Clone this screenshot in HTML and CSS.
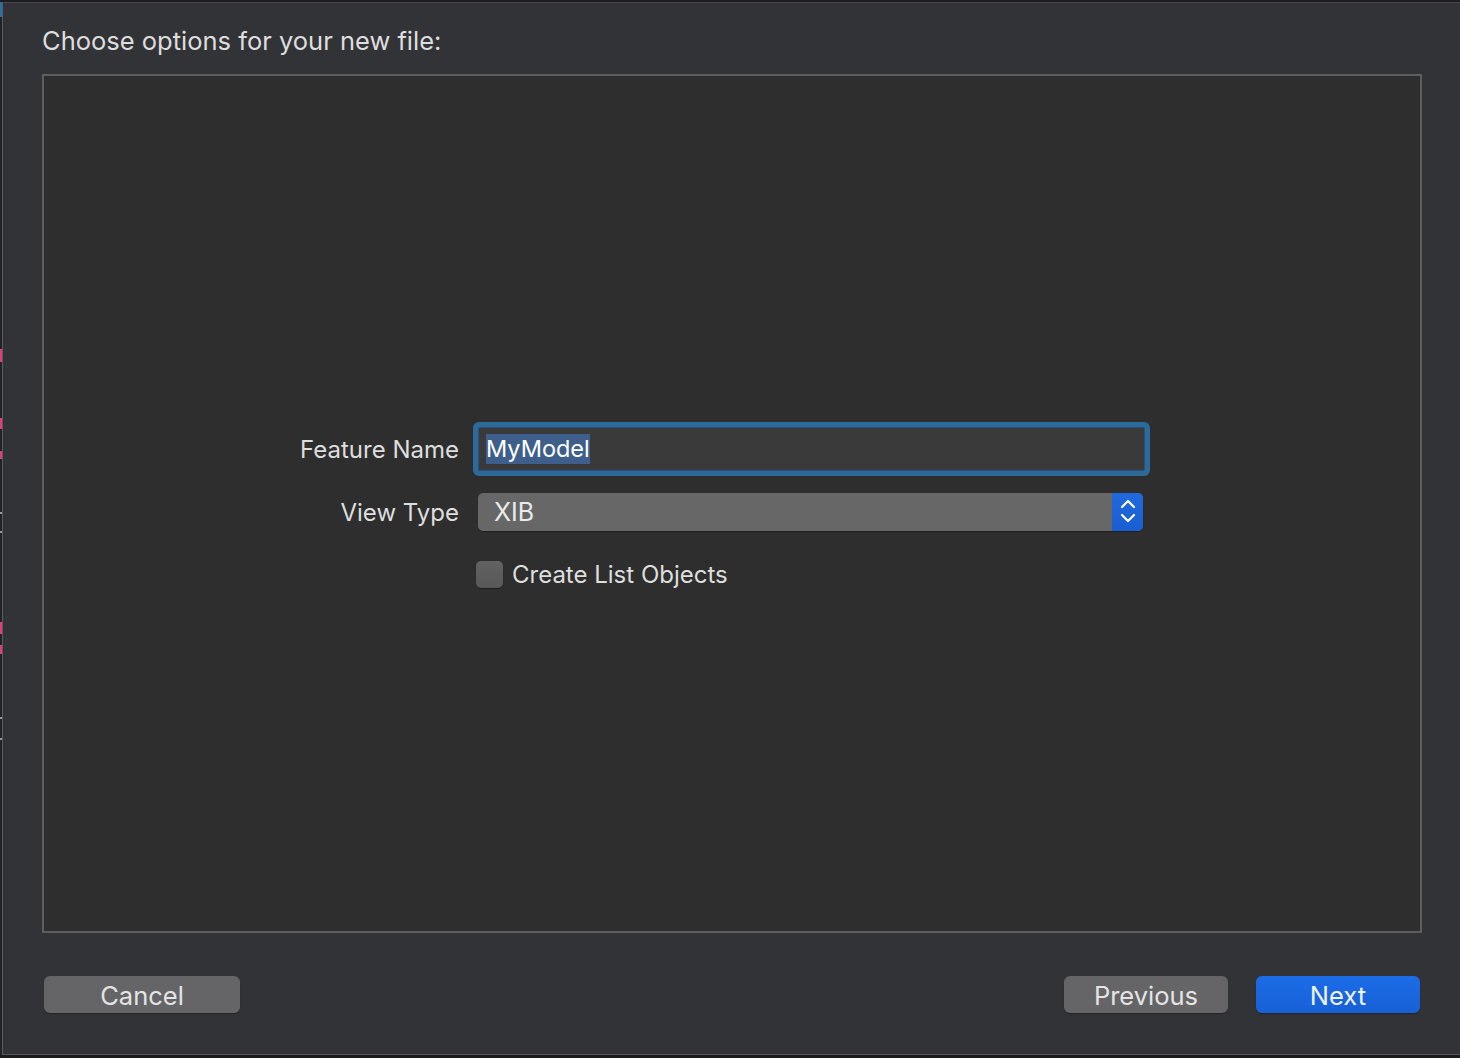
FILE: index.html
```html
<!DOCTYPE html>
<html lang="en">
<head>
<meta charset="UTF-8">
<meta name="viewport" content="width=device-width, initial-scale=1.0">
<title>Choose options for your new file</title>
<link rel="stylesheet" href="styles.css">
</head>
<body>
<div class="window">
    <div class="edge"></div>
    <div class="sheet">
        <h1 class="title">Choose options for your new file:</h1>
        <div class="panel">
            <div class="options">
                <div class="opt-label">Feature Name</div>
                <div class="field"><span class="selected">MyModel</span></div>

                <div class="opt-label">View Type</div>
                <div class="popup">
                    <div class="popup-value">XIB</div>
                    <div class="stepper">
                        <svg width="16" height="26" viewBox="0 0 16 26">
                            <path d="M2 8 L8 2 L14 8" fill="none" stroke="#fff" stroke-width="2.2" stroke-linecap="round" stroke-linejoin="round"/>
                            <path d="M2 16 L8 22 L14 16" fill="none" stroke="#fff" stroke-width="2.2" stroke-linecap="round" stroke-linejoin="round"/>
                        </svg>
                    </div>
                </div>

                <div></div>
                <div class="check-row">
                    <div class="checkbox"></div>
                    <div class="check-label">Create List Objects</div>
                </div>
            </div>
        </div>
        <div class="footer">
            <button class="btn btn-cancel">Cancel</button>
            <div class="spacer"></div>
            <button class="btn btn-prev">Previous</button>
            <button class="btn btn-next">Next</button>
        </div>
    </div>
</div>
</body>
</html>
```

FILE: styles.css
```css
body {
    margin: 0;
    background-color: #1c1c1e;
    font-family: Inter, "Liberation Sans", Arial, sans-serif;
    color: #dedede;
}

.window {
    display: flex;
    height: 1058px;
    box-sizing: border-box;
    border-top: 2px solid #1c1c1e;
    border-bottom: 3px solid #1c1c1e;
}

.edge {
    width: 2px;
    background: linear-gradient(to bottom,
        #2a6fa8 0, #2a6fa8 15px, #222326 15px, #222326 347px,
        #e0407a 347px, #e0407a 360px, #222326 360px, #222326 416px,
        #e0407a 416px, #e0407a 427px, #222326 427px, #222326 449px,
        #e0407a 449px, #e0407a 457px, #222326 457px, #222326 510px,
        #9a9a9a 510px, #9a9a9a 512px, #222326 512px, #222326 529px,
        #9a9a9a 529px, #9a9a9a 531px, #222326 531px, #222326 620px,
        #e0407a 620px, #e0407a 632px, #222326 632px, #222326 643px,
        #e0407a 643px, #e0407a 652px, #222326 652px, #222326 715px,
        #9a9a9a 715px, #9a9a9a 717px, #222326 717px, #222326 736px,
        #9a9a9a 736px, #9a9a9a 738px, #222326 738px);
}

.sheet {
    flex: 1;
    display: flex;
    flex-direction: column;
    background-color: #323337;
    border-left: 1px solid #5a5a5e;
    border-top: 1px solid #48484c;
    border-bottom: 1px solid #58585c;
    padding: 23px 38px 0 39px;
}

.title {
    margin: 0 0 18px 0;
    font-size: 25.5px;
    font-weight: normal;
    line-height: 30px;
    color: #dedede;
}

.panel {
    height: 859px;
    box-sizing: border-box;
    border: 2px solid #5e5e60;
    background-color: #2e2e2e;
    display: flex;
    align-items: center;
    padding-left: 235px;
}

.options {
    display: grid;
    grid-template-columns: 180px 667px;
    column-gap: 19px;
    row-gap: 22px;
    align-items: center;
    padding-top: 9px;
}

.opt-label {
    text-align: right;
    font-size: 24px;
    color: #dedede;
}

.field {
    height: 44px;
    box-sizing: border-box;
    background-color: #3a3a3a;
    border: 1px solid #27507a;
    border-radius: 2px;
    box-shadow: 0 0 0 5px #2b6a9a;
    display: flex;
    align-items: center;
    padding-left: 7px;
    font-size: 23.5px;
}

.selected {
    background-color: #3e5f8b;
    color: #fff;
    line-height: 30px;
}

.popup {
    width: 665px;
    height: 38px;
    display: flex;
    background-color: #676767;
    border-radius: 5px;
    box-shadow: 0 1px 1px rgba(0, 0, 0, 0.3);
}

.popup-value {
    flex: 1;
    padding-left: 16px;
    font-size: 25px;
    line-height: 39px;
    color: #eaeaea;
}

.stepper {
    width: 31px;
    background: linear-gradient(#2069df, #1a5fd0);
    border-radius: 0 5px 5px 0;
    display: flex;
    align-items: center;
    justify-content: center;
}

.check-row {
    display: flex;
    align-items: center;
    margin-left: -2px;
    margin-top: 7px;
}

.checkbox {
    width: 27px;
    height: 27px;
    box-sizing: border-box;
    border-radius: 5px;
    background: linear-gradient(#626262, #585858);
    box-shadow: 0 1px 1px rgba(0, 0, 0, 0.35);
    margin-right: 9px;
}

.check-label {
    font-size: 24px;
    color: #dedede;
}

.footer {
    display: flex;
    margin-top: 43px;
    padding: 0 2px;
}

.spacer {
    flex: 1;
}

.btn {
    height: 37px;
    border: none;
    border-radius: 6px;
    font-family: inherit;
    font-size: 25.5px;
    line-height: 39px;
    color: #e4e4e4;
    background-color: #656567;
    box-shadow: 0 1px 1px rgba(0, 0, 0, 0.3);
    padding: 0;
}

.btn-cancel {
    width: 196px;
}

.btn-prev {
    width: 164px;
    margin-right: 28px;
}

.btn-next {
    width: 164px;
    background: linear-gradient(#1c6de8, #1860d6);
    color: #eef3fc;
}
```
